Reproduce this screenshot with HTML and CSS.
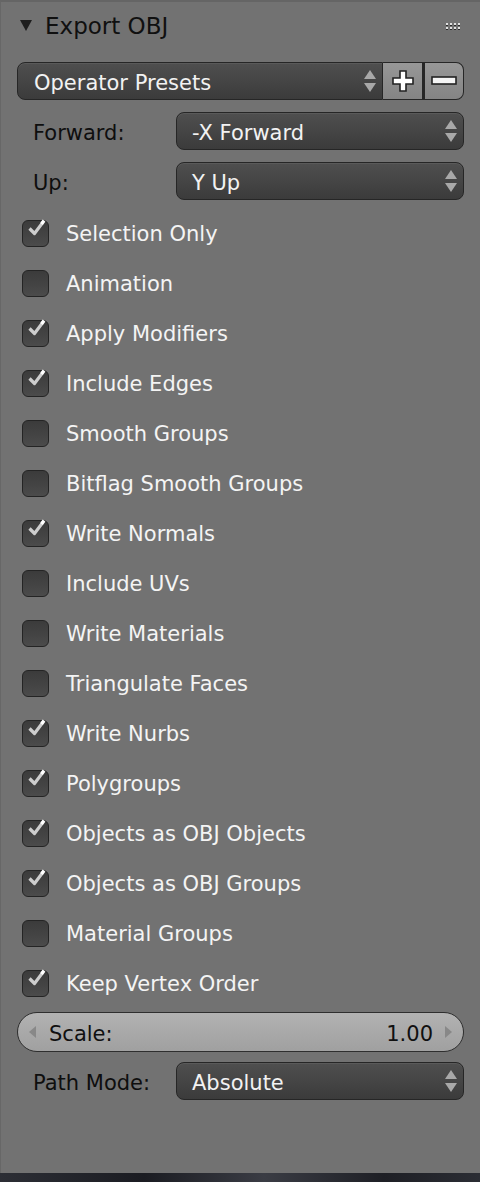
FILE: index.html
```html
<!DOCTYPE html>
<html>
<head>
<meta charset="utf-8">
<link rel="stylesheet" href="styles.css">
</head>
<body>
<div class="panel">
  <div class="header">
    <span class="tri"></span>
    <span class="title">Export OBJ</span>
    <span class="grip"><i></i><i></i><i></i><i></i><i></i><i></i><i></i><i></i></span>
  </div>

  <div class="presets">
    <div class="menu preset-menu">
      <span class="mtext">Operator Presets</span>
      <span class="updown"><b class="up"></b><b class="down"></b></span>
    </div>
    <div class="pbtn plus">
      <svg width="26" height="26" viewBox="0 0 26 26"><path d="M10 3h6v7h7v6h-7v7h-6v-7H3v-6h7z" fill="#fff" stroke="#222" stroke-width="1.6"/></svg>
    </div>
    <div class="pbtn minus">
      <svg width="28" height="12" viewBox="0 0 28 12"><rect x="2" y="2" width="24" height="7" fill="#f4f4f4" stroke="#222" stroke-width="1.6"/></svg>
    </div>
  </div>

  <div class="prop">
    <span class="plabel">Forward:</span>
    <div class="menu"><span class="mtext">-X Forward</span><span class="updown"><b class="up"></b><b class="down"></b></span></div>
  </div>
  <div class="prop">
    <span class="plabel">Up:</span>
    <div class="menu"><span class="mtext">Y Up</span><span class="updown"><b class="up"></b><b class="down"></b></span></div>
  </div>

  <div class="checks">
    <div class="chk on"><span class="box"></span><span class="clabel">Selection Only</span></div>
    <div class="chk"><span class="box"></span><span class="clabel">Animation</span></div>
    <div class="chk on"><span class="box"></span><span class="clabel">Apply Modifiers</span></div>
    <div class="chk on"><span class="box"></span><span class="clabel">Include Edges</span></div>
    <div class="chk"><span class="box"></span><span class="clabel">Smooth Groups</span></div>
    <div class="chk"><span class="box"></span><span class="clabel">Bitflag Smooth Groups</span></div>
    <div class="chk on"><span class="box"></span><span class="clabel">Write Normals</span></div>
    <div class="chk"><span class="box"></span><span class="clabel">Include UVs</span></div>
    <div class="chk"><span class="box"></span><span class="clabel">Write Materials</span></div>
    <div class="chk"><span class="box"></span><span class="clabel">Triangulate Faces</span></div>
    <div class="chk on"><span class="box"></span><span class="clabel">Write Nurbs</span></div>
    <div class="chk on"><span class="box"></span><span class="clabel">Polygroups</span></div>
    <div class="chk on"><span class="box"></span><span class="clabel">Objects as OBJ Objects</span></div>
    <div class="chk on"><span class="box"></span><span class="clabel">Objects as OBJ Groups</span></div>
    <div class="chk"><span class="box"></span><span class="clabel">Material Groups</span></div>
    <div class="chk on"><span class="box"></span><span class="clabel">Keep Vertex Order</span></div>
  </div>

  <div class="scale">
    <span class="arrow left"></span>
    <span class="slabel">Scale:</span>
    <span class="sval">1.00</span>
    <span class="arrow right"></span>
  </div>

  <div class="prop path">
    <span class="plabel">Path Mode:</span>
    <div class="menu"><span class="mtext">Absolute</span><span class="updown"><b class="up"></b><b class="down"></b></span></div>
  </div>
</div>
<div class="ground"></div>
</body>
</html>
```
FILE: styles.css
```css
html, body {
  margin: 0;
  padding: 0;
  background: #24262c;
}
body {
  font-family: "DejaVu Sans", sans-serif;
  width: 480px;
  height: 1182px;
  overflow: hidden;
}
.panel {
  box-sizing: border-box;
  width: 480px;
  height: 1173px;
  background: #727272;
  border-top: 2px solid #656565;
  border-left: 1px solid #676767;
  padding: 0 16px 0 15px;
  display: flex;
  flex-direction: column;
}
.ground {
  height: 9px;
  background: linear-gradient(90deg, #2c2e35, #1b1c22 30%, #3a3c44 55%, #1e1f25 80%, #2b2d34);
}

/* header */
.header {
  height: 48px;
  display: flex;
  align-items: center;
  position: relative;
}
.tri {
  width: 0;
  height: 0;
  border-left: 6px solid transparent;
  border-right: 6px solid transparent;
  border-top: 11px solid #1e1e1e;
  margin-left: 4px;
  margin-top: -1px;
}
.title {
  margin-left: 13px;
  font-size: 23px;
  color: #101010;
  margin-top: -1px;
}
.grip {
  margin-left: auto;
  margin-right: 4px;
  display: grid;
  grid-template-columns: repeat(4, 2px);
  grid-template-rows: 2px 2px;
  column-gap: 2px;
  row-gap: 2px;
}
.grip i {
  width: 2px;
  height: 2px;
  background: #e0e0e0;
  box-shadow: 0 1px 0 #2a2a2a;
}

/* menus */
.menu {
  flex: 1;
  height: 38px;
  box-sizing: border-box;
  border: 1px solid #262626;
  border-radius: 8px;
  background: linear-gradient(#4f4f4f, #3b3b3b);
  box-shadow: inset 0 1px 0 #5a5a5a;
  display: flex;
  align-items: center;
  padding-left: 15px;
  padding-right: 6px;
}
.mtext {
  color: #f2f2f2;
  font-size: 21px;
  flex: 1;
  padding-top: 4px;
}
.updown {
  display: flex;
  flex-direction: column;
  gap: 4px;
  width: 12px;
  align-items: center;
}
.updown b {
  width: 0;
  height: 0;
  border-left: 6px solid transparent;
  border-right: 6px solid transparent;
}
.updown .up { border-bottom: 9px solid #a8a8a8; }
.updown .down { border-top: 9px solid #a8a8a8; }

.presets {
  margin-top: 12px;
  height: 38px;
  display: flex;
  margin-left: 1px;
}
.preset-menu {
  border-radius: 8px 0 0 8px;
  padding-left: 16px;
}
.pbtn {
  box-sizing: border-box;
  height: 38px;
  width: 41px;
  background: linear-gradient(#979797, #848484);
  border: 1px solid #262626;
  border-left: none;
  display: flex;
  align-items: center;
  justify-content: center;
}
.plus { width: 40px; }
.minus { border-radius: 0 8px 8px 0; border-left: 2px solid #262626; }

.prop {
  margin-top: 12px;
  height: 38px;
  display: flex;
  align-items: center;
}
.plabel {
  width: 143px;
  padding-left: 17px;
  font-size: 21px;
  color: #0e0e0e;
  flex: none;
  padding-top: 4px;
}

/* checkboxes */
.checks {
  margin-top: 8px;
  display: flex;
  flex-direction: column;
}
.chk {
  height: 50px;
  display: flex;
  align-items: center;
}
.box {
  box-sizing: border-box;
  width: 27px;
  height: 27px;
  margin-left: 6px;
  border: 1px solid #242424;
  border-radius: 6px;
  background: linear-gradient(#3b3b3b, #4b4b4b);
  position: relative;
}
.chk.on .box::after {
  content: "";
  position: absolute;
  left: 5px;
  top: -2px;
  width: 18px;
  height: 18px;
  background: url("data:image/svg+xml;utf8,<svg xmlns='http://www.w3.org/2000/svg' width='18' height='18' viewBox='0 0 18 18'><polyline points='1.5,9.5 6.5,14.5 15.5,2.5' fill='none' stroke='%23cdcdcd' stroke-width='3.2' stroke-linejoin='round'/><line x1='13.5' y1='5' x2='16' y2='1.5' stroke='%23ffffff' stroke-width='3.2'/></svg>") no-repeat;
}
.clabel {
  margin-left: 17px;
  font-size: 21px;
  color: #f4f4f4;
  padding-top: 1px;
}

/* scale slider */
.scale {
  margin-top: 4px;
  margin-left: 1px;
  height: 40px;
  box-sizing: border-box;
  border: 1px solid #2e2e2e;
  border-radius: 20px;
  background: linear-gradient(#b2b2b2, #a0a0a0);
  display: flex;
  align-items: center;
  padding: 0 11px;
}
.arrow {
  width: 0;
  height: 0;
  border-top: 6px solid transparent;
  border-bottom: 6px solid transparent;
}
.arrow.left { border-right: 7px solid #888; }
.arrow.right { border-left: 7px solid #888; }
.slabel {
  margin-left: 13px;
  font-size: 21px;
  color: #101010;
  flex: 1;
  padding-top: 3px;
}
.sval {
  font-size: 21px;
  color: #101010;
  margin-right: 12px;
  padding-top: 3px;
}
.path { margin-top: 10px; }
```
